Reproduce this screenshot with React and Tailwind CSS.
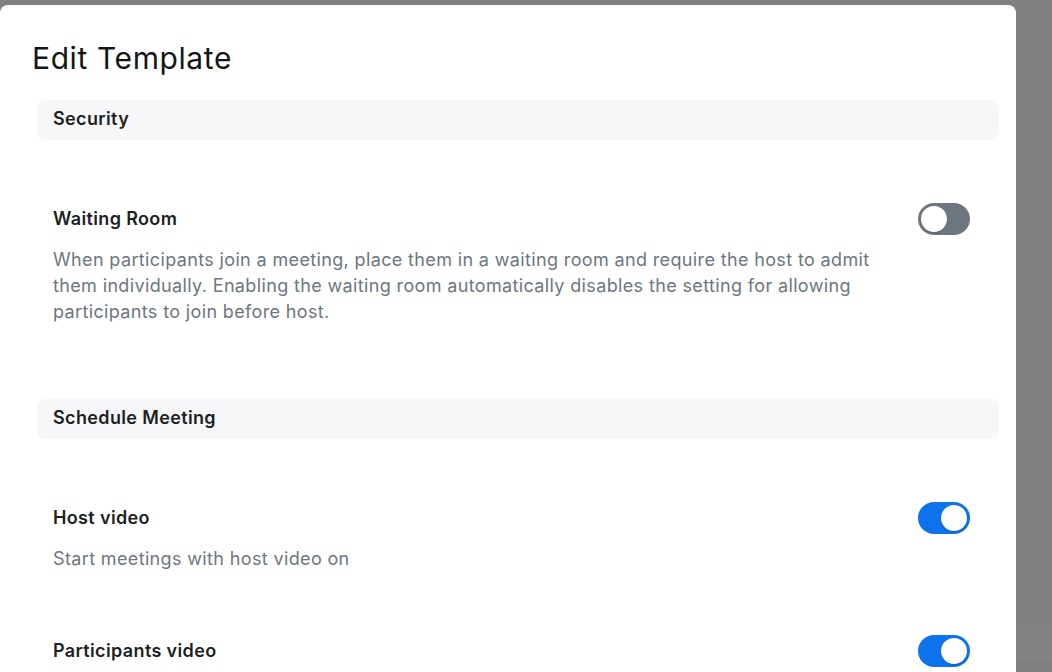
import React, { useState } from 'react';

const Toggle = ({ on, onChange }) => (
  <button
    type="button"
    onClick={onChange}
    className={`flex h-[32px] w-[52px] shrink-0 items-center rounded-full p-[3px] transition-colors ${
      on ? 'justify-end bg-[#0e72ed]' : 'justify-start bg-[#6e7680]'
    }`}
  >
    <span className="h-[26px] w-[26px] rounded-full bg-white shadow-[0_1px_2px_rgba(0,0,0,0.2)]" />
  </button>
);

const SettingItem = ({ title, desc, on, onToggle }) => (
  <div className="pl-4 pr-[29px] pt-[63px]">
    <div className="flex h-[32px] items-center justify-between">
      <h3 className="pb-[2px] text-[18px] font-semibold tracking-[0.02em] text-[#1d1f24]">{title}</h3>
      <Toggle on={on} onChange={onToggle} />
    </div>
    <p className="mt-3 max-w-[840px] text-[18px] leading-[26px] tracking-[0.02em] text-[#6e7680]">{desc}</p>
  </div>
);

const SectionHeader = ({ children }) => (
  <div className="flex h-[40px] items-center rounded-lg bg-[#f7f7f9] px-4 pb-[3px]">
    <h2 className="text-[18px] font-semibold tracking-[0.02em] text-[#1d1f24]">{children}</h2>
  </div>
);

export default function App() {
  const [settings, setSettings] = useState({ waiting: false, host: true, participants: true });

  const flip = (key) => setSettings((s) => ({ ...s, [key]: !s[key] }));

  return (
    <div className="flex h-[672px] w-full overflow-hidden bg-[#808080] font-['Inter',sans-serif]">
      {/* Modal */}
      <div className="mt-[5px] w-[1016px] shrink-0 rounded-t-lg bg-white">
        <h1 className="pl-8 pt-9 text-[30px] leading-[34px] tracking-[0.02em] text-[#131619]">Edit Template</h1>

        <div className="mt-[25px] flex flex-col gap-[74px] pl-[37px] pr-[17px]">
          <section>
            <SectionHeader>Security</SectionHeader>
            <SettingItem
              title="Waiting Room"
              desc="When participants join a meeting, place them in a waiting room and require the host to admit them individually. Enabling the waiting room automatically disables the setting for allowing participants to join before host."
              on={settings.waiting}
              onToggle={() => flip('waiting')}
            />
          </section>

          <section>
            <SectionHeader>Schedule Meeting</SectionHeader>
            <SettingItem
              title="Host video"
              desc="Start meetings with host video on"
              on={settings.host}
              onToggle={() => flip('host')}
            />
            <SettingItem
              title="Participants video"
              desc="Start meetings with participant video on"
              on={settings.participants}
              onToggle={() => flip('participants')}
            />
          </section>
        </div>
      </div>

      {/* Dimmed page behind the modal */}
      <div className="flex flex-1 flex-col">
        <div className="h-[20px] border-b border-[#848484]" />
        <div className="flex-1" />
        <div className="mb-[11px] h-[38px] border-y border-[#858585] bg-[#838383]" />
      </div>
    </div>
  );
}
